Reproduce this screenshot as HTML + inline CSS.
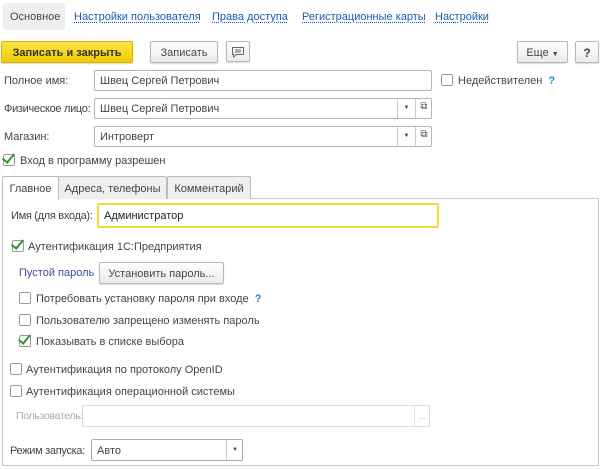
<!DOCTYPE html>
<html><head><meta charset="utf-8"><style>
*{box-sizing:border-box;margin:0;padding:0}
body{width:600px;height:469px;background:#fff;font-family:"Liberation Sans",Arial,sans-serif;font-size:11px;color:#444;position:relative;overflow:hidden}
.a{position:absolute;white-space:nowrap}
.lnk{color:#1c5ab2;text-decoration:underline;text-decoration-style:dotted;text-underline-offset:2px}
.btn{position:absolute;border:1px solid #b8b8b8;border-radius:2px;background:linear-gradient(#fff,#ebebeb);text-align:center;box-shadow:0 1px 1px rgba(0,0,0,.15);white-space:nowrap}
.inp{position:absolute;border:1px solid #b5b5b5;border-radius:2px;background:#fff;padding-left:5px;white-space:nowrap}
.seg{position:absolute;top:0;bottom:0;border-left:1px solid #ccc;text-align:center}
.cb{position:absolute;width:12px;height:12px;border:1px solid #9a9a9a;border-radius:2px;background:#fff}
.ck{position:absolute;left:1px;top:-4px;width:7px;height:12px;border-right:2.5px solid #2a9a2a;border-bottom:2.5px solid #2a9a2a;transform:rotate(40deg)}
.q{color:#1a8bd0;font-weight:bold}
.tab{position:absolute;top:176px;height:23px;border:1px solid #bbb;border-bottom:none;background:#efefef;padding:6px 0 0;text-align:center;border-radius:2px 2px 0 0}
.n{letter-spacing:-0.3px}
</style></head><body>
<div class="a" style="left:3px;top:3px;width:62px;height:27px;background:#efefef;border-radius:3px"></div>
<div class="a" style="left:10px;top:11px">Основное</div>
<div class="a lnk" style="left:74px;top:11px">Настройки пользователя</div>
<div class="a lnk" style="left:212px;top:11px">Права доступа</div>
<div class="a lnk" style="left:302px;top:11px">Регистрационные карты</div>
<div class="a lnk" style="left:435px;top:11px">Настройки</div>

<div class="btn" style="left:1px;top:41px;width:132px;height:22px;background:linear-gradient(#fbe44a,#f2cc00);border-color:#d9b400;font-weight:bold;padding-top:5px;color:#333">Записать и закрыть</div>
<div class="btn" style="left:150px;top:41px;width:68px;height:22px;padding-top:5px">Записать</div>
<div class="btn" style="left:226px;top:41px;width:24px;height:21px"><svg width="14" height="12" viewBox="0 0 14 12" style="margin-top:4px"><path d="M1.5 1.5h11v7h-7l-3 2.5v-2.5h-1z" fill="none" stroke="#666"/><path d="M4 4h6M4 6h6" stroke="#666"/></svg></div>
<div class="btn" style="left:517px;top:41px;width:51px;height:22px;padding:5px 0 0 0">Еще <span style="font-size:7px">▼</span></div>
<div class="btn" style="left:575px;top:41px;width:24px;height:22px;padding-top:4px;font-weight:bold;font-size:12px">?</div>

<div class="a" style="left:4px;top:75px">Полное имя:</div>
<div class="inp" style="left:94px;top:70px;width:338px;height:21px;padding-top:4px">Швец Сергей Петрович</div>
<div class="cb" style="left:441px;top:74px"></div>
<div class="a" style="left:458px;top:75px">Недействителен&nbsp; <span class="q">?</span></div>

<div class="a n" style="left:4px;top:103px">Физическое лицо:</div>
<div class="inp" style="left:94px;top:98px;width:338px;height:21px;padding-top:4px">Швец Сергей Петрович<div class="seg" style="left:302px;width:18px;font-size:6px;padding-top:6px">▼</div><div class="seg" style="left:320px;width:17px;font-size:10px;padding-top:2px">⧉</div></div>

<div class="a" style="left:4px;top:131px">Магазин:</div>
<div class="inp" style="left:94px;top:126px;width:338px;height:21px;padding-top:4px">Интроверт<div class="seg" style="left:302px;width:18px;font-size:6px;padding-top:6px">▼</div><div class="seg" style="left:320px;width:17px;font-size:10px;padding-top:2px">⧉</div></div>

<div class="cb" style="left:3px;top:154px"><div class="ck"></div></div>
<div class="a" style="left:20px;top:155px">Вход в программу разрешен</div>

<div class="a" style="left:2px;top:198px;width:597px;height:268px;border:1px solid #c8c8c8;background:#fff"></div>
<div class="tab" style="left:2px;width:57px;background:#fff;height:24px;z-index:2">Главное</div>
<div class="tab" style="left:58px;width:109px">Адреса, телефоны</div>
<div class="tab" style="left:167px;width:84px">Комментарий</div>

<div class="a n" style="left:11px;top:210px">Имя (для входа):</div>
<div class="inp" style="left:97px;top:203px;width:342px;height:25px;border:2px solid #f5d83a;padding-top:5px;color:#222">Администратор</div>

<div class="cb" style="left:12px;top:240px"><div class="ck"></div></div>
<div class="a" style="left:28px;top:241px">Аутентификация 1С:Предприятия</div>
<div class="a" style="left:19px;top:267px;color:#3a4e9a">Пустой пароль</div>
<div class="btn" style="left:99px;top:262px;width:125px;height:22px;padding-top:5px">Установить пароль...</div>

<div class="cb" style="left:19px;top:292px"></div>
<div class="a" style="left:36px;top:293px">Потребовать установку пароля при входе&nbsp; <span class="q">?</span></div>
<div class="cb" style="left:19px;top:314px"></div>
<div class="a" style="left:36px;top:315px">Пользователю запрещено изменять пароль</div>
<div class="cb" style="left:19px;top:335px"><div class="ck"></div></div>
<div class="a" style="left:36px;top:336px">Показывать в списке выбора</div>

<div class="cb" style="left:10px;top:363px"></div>
<div class="a" style="left:26px;top:364px">Аутентификация по протоколу OpenID</div>
<div class="cb" style="left:10px;top:385px"></div>
<div class="a" style="left:26px;top:386px">Аутентификация операционной системы</div>

<div class="inp" style="left:82px;top:405px;width:348px;height:22px;border-color:#ddd"><div class="seg" style="left:331px;width:16px;border-color:#e4e4e4;color:#aaa;font-size:9px;padding-top:5px">...</div></div>
<div class="a n" style="left:16px;top:410px;color:#aaa;font-size:10.5px">Пользователь:</div>

<div class="a n" style="left:10px;top:445px">Режим запуска:</div>
<div class="inp" style="left:91px;top:439px;width:152px;height:22px;padding-top:5px;border-color:#aaa">Авто<div class="seg" style="left:134px;width:17px;font-size:6px;padding-top:7px">▼</div></div>
</body></html>
